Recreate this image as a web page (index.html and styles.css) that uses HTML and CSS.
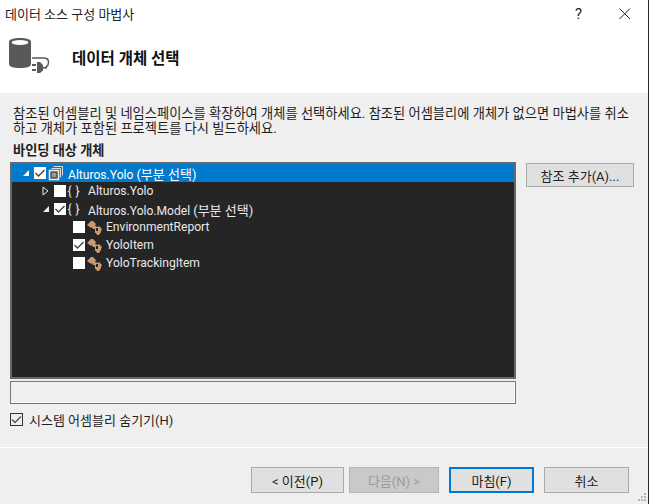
FILE: index.html
```html
<!DOCTYPE html>
<html lang="ko">
<head>
<meta charset="utf-8">
<title>데이터 소스 구성 마법사</title>
<link rel="stylesheet" href="styles.css">
</head>
<body>
<div class="window">
  <div class="dialog">
    <header class="top">
      <div class="titlebar">
        <span class="title">데이터 소스 구성 마법사</span>
        <span class="help">?</span>
        <svg class="close" width="12" height="12" viewBox="0 0 12 12"><path d="M.5.5l10.500 10.500M11 .5L.5 11" stroke="#222" fill="none"/></svg>
      </div>
      <div class="banner">
        <svg class="wizard-icon" width="42" height="36" viewBox="0 0 42 36">
          <path d="M0 4c0-3 5-4 11-4s11 1 11 4v22c0 3-5 4-11 4s-11-1-11-4z" fill="#58595b"/>
          <ellipse cx="11" cy="4.500" rx="8.500" ry="2.400" fill="#fff"/>
          <path d="M23 20h12c5 0 5 4 4 7l-3 3" stroke="#58595b" stroke-width="1.500" fill="none"/>
          <path d="M28 24h3l3 3v2h4v1.500h-4v2l-3 2.500h-3z" fill="#58595b"/>
          <path d="M23 26h4v2h-4zM23 31h4v2h-4z" fill="#58595b"/>
        </svg>
        <h1 class="banner-title">데이터 개체 선택</h1>
      </div>
    </header>
    <main class="content">
      <p class="desc">참조된 어셈블리 및 네임스페이스를 확장하여 개체를 선택하세요. 참조된 어셈블리에 개체가 없으면 마법사를 취소<br>하고 개체가 포함된 프로젝트를 다시 빌드하세요.</p>
      <div class="label">바인딩 대상 개체</div>
      <div class="picker">
        <div class="tree">
          <div class="row selected lvl0">
            <svg class="arrow" width="8" height="8" viewBox="0 0 8 8"><path d="M7 1v6H1z" fill="#fff"/></svg>
            <span class="check"><svg width="12" height="12" viewBox="0 0 12 12"><path d="M1.500 6l3 3 6-6" stroke="#444" stroke-width="1.400" fill="none"/></svg></span>
            <svg class="glyph" width="16" height="16" viewBox="0 0 16 16"><path d="M5.500 1.500h9v9M3.500 3.500h9v9" fill="none" stroke="#ddd"/><path d="M1.500 5.500h9v9h-9z" fill="#58595b" stroke="#eee" stroke-width="1.500"/><path d="M4 8h4v4H4z" fill="#999"/></svg>
            <span class="name">Alturos.Yolo <span class="ko">(부분 선택)</span></span>
          </div>
          <div class="row lvl1">
            <svg class="arrow" width="8" height="10" viewBox="0 0 8 10"><path d="M1 1l5 4-5 4z" fill="none" stroke="#eee"/></svg>
            <span class="check"></span>
            <span class="braces">{ }</span>
            <span class="name">Alturos.Yolo</span>
          </div>
          <div class="row lvl1">
            <svg class="arrow" width="8" height="8" viewBox="0 0 8 8"><path d="M7 1v6H1z" fill="#eee"/></svg>
            <span class="check"><svg width="12" height="12" viewBox="0 0 12 12"><path d="M1.500 6l3 3 6-6" stroke="#444" stroke-width="1.400" fill="none"/></svg></span>
            <span class="braces">{ }</span>
            <span class="name">Alturos.Yolo.Model <span class="ko">(부분 선택)</span></span>
          </div>
          <div class="row lvl2">
            <span class="check"></span>
            <svg class="glyph" width="15" height="15" viewBox="0 0 15 15"><path d="M0 5l4-4h2l3 3-1 2 3 1 1-1 3 3-1 2 0 1-2 3h-2l-1-2H8V9H6L5 7 4 8z" fill="#c99a6b"/><path d="M9 8h2v3H9z" fill="#252526"/></svg>
            <span class="name">EnvironmentReport</span>
          </div>
          <div class="row lvl2">
            <span class="check"><svg width="12" height="12" viewBox="0 0 12 12"><path d="M1.500 6l3 3 6-6" stroke="#444" stroke-width="1.400" fill="none"/></svg></span>
            <svg class="glyph" width="15" height="15" viewBox="0 0 15 15"><path d="M0 5l4-4h2l3 3-1 2 3 1 1-1 3 3-1 2 0 1-2 3h-2l-1-2H8V9H6L5 7 4 8z" fill="#c99a6b"/><path d="M9 8h2v3H9z" fill="#252526"/></svg>
            <span class="name">YoloItem</span>
          </div>
          <div class="row lvl2">
            <span class="check"></span>
            <svg class="glyph" width="15" height="15" viewBox="0 0 15 15"><path d="M0 5l4-4h2l3 3-1 2 3 1 1-1 3 3-1 2 0 1-2 3h-2l-1-2H8V9H6L5 7 4 8z" fill="#c99a6b"/><path d="M9 8h2v3H9z" fill="#252526"/></svg>
            <span class="name">YoloTrackingItem</span>
          </div>
        </div>
        <button class="btn add">참조 추가(A)...</button>
      </div>
      <div class="detail"></div>
      <label class="hide">
        <span class="check outlined"><svg width="11" height="11" viewBox="0 0 11 11"><path d="M1 5.500l3 3 6-6" stroke="#555" stroke-width="1.400" fill="none"/></svg></span>
        시스템 어셈블리 숨기기(H)
      </label>
    </main>
    <footer class="footer">
      <button class="btn back">&lt; 이전(P)</button>
      <button class="btn next" disabled>다음(N) &gt;</button>
      <button class="btn finish">마침(F)</button>
      <button class="btn cancel">취소</button>
      <svg class="grip" width="8" height="8" viewBox="0 0 8 8"><path d="M6 0h2v2H6zM3 3h2v2H3zM6 3h2v2H6zM0 6h2v2H0zM3 6h2v2H3zM6 6h2v2H6z" fill="#b5b5b5"/></svg>
    </footer>
  </div>
  <div class="edge"></div>
</div>
</body>
</html>
```
FILE: styles.css
```css
* { box-sizing: border-box; }
html, body { margin: 0; padding: 0; }
body {
  width: 652px;
  height: 504px;
  overflow: hidden;
  font-family: "Roboto", "Noto Sans CJK KR", sans-serif;
  font-size: 13px;
  color: #1e1e1e;
}
.window { display: flex; width: 652px; height: 504px; background: #fff; }
.dialog { width: 648px; display: flex; flex-direction: column; background: #efefef; position: relative; }
.edge { width: 1px; background: #2b2b2b; }
.top { height: 93px; background: #fff; display: flex; flex-direction: column; }
.titlebar { height: 27px; display: flex; align-items: center; padding: 0 17px 0 5px; }
.title { flex: 1; }
.help { margin-right: 37px; font-size: 15px; }
.banner { flex: 1; display: flex; align-items: flex-start; padding: 11px 0 0 9px; }
.wizard-icon { flex: none; }
.banner-title { margin: 11px 0 0 21px; font-size: 15.500px; font-weight: 700; color: #111; line-height: 20px; }
.content { height: 355px; padding: 13px 0 0 10px; border-bottom: 1px solid #fff; }
.desc { margin: 0 0 0 3px; line-height: 15px; width: 630px; font-size: 13.250px; white-space: nowrap; }
.label { margin-top: 6px; font-weight: 700; font-size: 13.200px; line-height: 17px; height: 20px; padding-left: 3px; }
.picker { display: flex; align-items: flex-start; gap: 10px; }
.tree { width: 506px; height: 217px; background: #252526; border: 2px solid #686868; color: #e8e8e8; font-size: 12.100px; }
.row { display: flex; align-items: center; height: 18px; white-space: nowrap; }
.selected { background: #007acc; color: #fff; }
.lvl0 { padding-left: 9px; }
.lvl1 { padding-left: 29px; }
.lvl2 { padding-left: 61px; }
.arrow { flex: none; width: 10px; margin-right: 3px; }
.check { flex: none; display: flex; width: 12px; height: 12px; background: #fff; align-items: center; justify-content: center; }
.glyph { flex: none; margin-left: 2px; }
.lvl0 .name { margin-left: 4px; }
.lvl1 .name { margin-left: 8px; }
.lvl2 .name { margin-left: 4px; }
.ko { font-size: 13px; }
.braces { width: 13px; margin-left: 1px; text-align: center; font-size: 12px; word-spacing: 1px; white-space: nowrap; }
.btn { font: inherit; color: #1e1e1e; background: #e0e0e0; border: 1.500px solid #aaa; padding: 0; }
.add { width: 108px; height: 24px; margin-top: 1px; }
.detail { width: 506px; height: 23px; margin-top: 2px; border: 1px solid #777; box-shadow: inset -1px -1px 0 #fff; }
.hide { display: flex; align-items: center; gap: 6px; margin-top: 8px; height: 14px; }
.check.outlined { width: 13px; height: 13px; background: transparent; border: 1px solid #333; }
.footer { flex: 1; display: flex; align-items: flex-start; padding: 19px 0 0 251px; }
.footer .btn { height: 26px; }
.back { width: 93px; margin-right: 5px; }
.next { width: 90px; margin-right: 10px; background: #c9c9c9; color: #9a9a9a; border-color: #b5b5b5; }
.finish { width: 85px; margin-right: 10px; border: 2px solid #0078d4; }
.cancel { width: 85px; }
.grip { position: absolute; right: 2px; bottom: 3px; }
```
